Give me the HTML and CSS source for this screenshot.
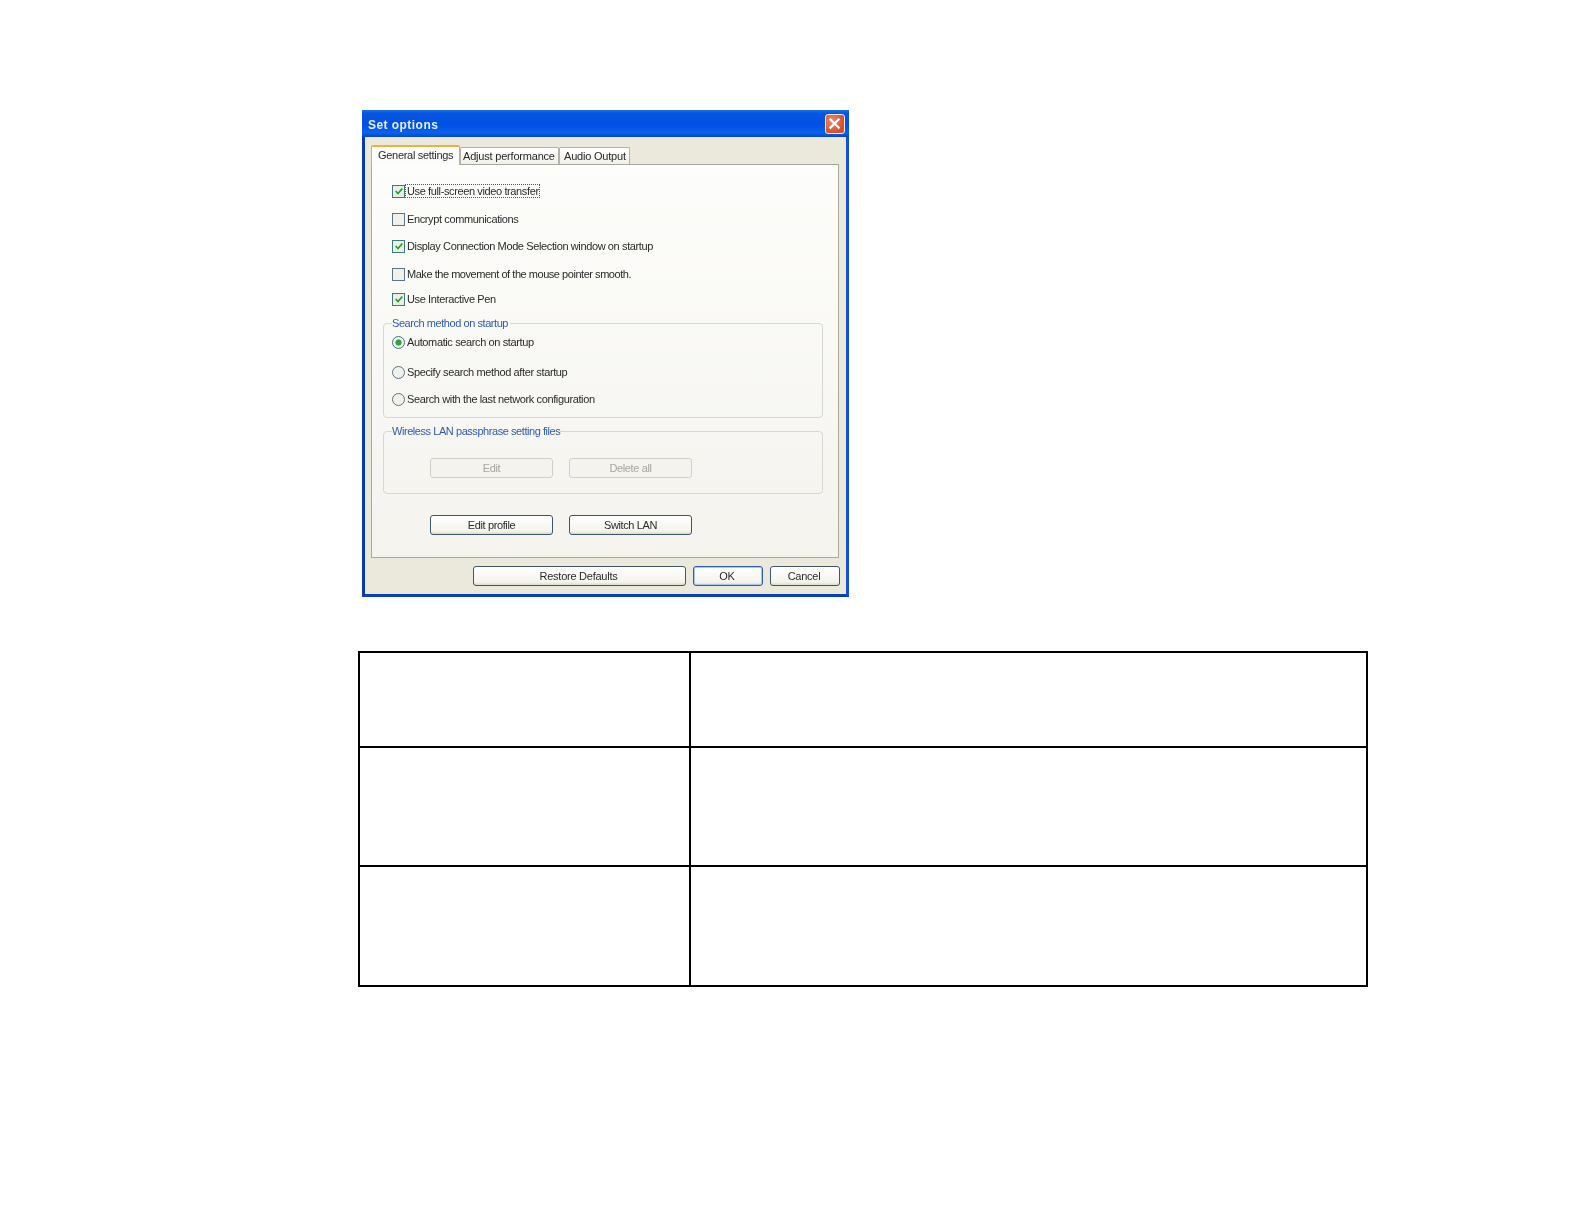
FILE: index.html
```html
<!DOCTYPE html>
<html lang="en">
<head>
<meta charset="utf-8">
<title>Set options</title>
<link rel="stylesheet" href="styles.css">
</head>
<body>
<section class="dialog">
  <header class="titlebar">
    <span class="title">Set options</span>
    <span class="close">
      <svg viewBox="0 0 20 20" width="18" height="18"><path d="M5 5 L14 14 M14 5 L5 14" stroke="#fff" stroke-width="2.4" fill="none" stroke-linecap="square"/></svg>
    </span>
  </header>
  <div class="client">
    <nav class="tabs">
      <span class="tab active">General settings</span>
      <span class="tab adjust">Adjust performance</span>
      <span class="tab audio">Audio Output</span>
    </nav>
    <div class="panel">
      <div class="opt first"><span class="check on"><svg viewBox="0 0 12 12" width="10" height="10"><path d="M2 6 L4.8 9 L10 3" stroke="#21a121" stroke-width="2" fill="none"/></svg></span><span class="label focus">Use full-screen video transfer</span></div>
      <div class="opt g14"><span class="check"></span><span class="label">Encrypt communications</span></div>
      <div class="opt g13"><span class="check on"><svg viewBox="0 0 12 12" width="10" height="10"><path d="M2 6 L4.8 9 L10 3" stroke="#21a121" stroke-width="2" fill="none"/></svg></span><span class="label">Display Connection Mode Selection window on startup</span></div>
      <div class="opt g14"><span class="check"></span><span class="label tight">Make the movement of the mouse pointer smooth.</span></div>
      <div class="opt g11"><span class="check on"><svg viewBox="0 0 12 12" width="10" height="10"><path d="M2 6 L4.8 9 L10 3" stroke="#21a121" stroke-width="2" fill="none"/></svg></span><span class="label">Use Interactive Pen</span></div>

      <fieldset class="group search">
        <legend>Search method on startup</legend>
        <div class="opt"><span class="radio on"></span><span class="label">Automatic search on startup</span></div>
        <div class="opt g16"><span class="radio"></span><span class="label">Specify search method after startup</span></div>
        <div class="opt g13"><span class="radio"></span><span class="label">Search with the last network configuration</span></div>
      </fieldset>

      <fieldset class="group wireless">
        <legend>Wireless LAN passphrase setting files</legend>
        <div class="btnrow">
          <span class="btn disabled">Edit</span>
          <span class="btn disabled">Delete all</span>
        </div>
      </fieldset>

      <div class="btnrow outer">
        <span class="btn">Edit profile</span>
        <span class="btn">Switch LAN</span>
      </div>
    </div>
    <footer class="footer">
      <span class="btn restore">Restore Defaults</span>
      <span class="btn ok">OK</span>
      <span class="btn cancel">Cancel</span>
    </footer>
  </div>
</section>

<table class="sheet">
  <colgroup><col class="c1"><col class="c2"></colgroup>
  <tr class="r1"><td></td><td></td></tr>
  <tr class="r2"><td></td><td></td></tr>
  <tr class="r3"><td></td><td></td></tr>
</table>
</body>
</html>
```
FILE: styles.css
```css
* { box-sizing: border-box; }
html, body { margin: 0; background: #fff; }
body {
  height: 1224px;
  padding-top: 110px;
  font-family: "Liberation Sans", Arial, sans-serif;
  font-size: 11px;
  letter-spacing: -0.38px;
  overflow: hidden;
}
.dialog {
  width: 487px;
  height: 487px;
  margin-left: 362px;
  display: flex;
  flex-direction: column;
  background: #0a4fd8;
  border: 3px solid #0c48c8;
  border-top: 0;
  border-bottom-color: #0b3fb4;
  border-left-color: #0a3ba8;
  border-right-color: #1450d0;
  filter: blur(0.4px);
}
.titlebar {
  height: 27px;
  flex: none;
  margin: 0 -3px;
  padding: 0 4px 0 6px;
  display: flex;
  align-items: center;
  justify-content: space-between;
  background: linear-gradient(#1a74e8 0, #0656e0 12%, #0250e4 55%, #0a62ee 85%, #0046c8 100%);
}
.title {
  color: #e8eef8;
  font: bold 12px "Liberation Sans", sans-serif;
  letter-spacing: 0.45px;
  padding-top: 3px;
}
.close {
  width: 20px;
  height: 20px;
  display: flex;
  align-items: center;
  justify-content: center;
  background: radial-gradient(circle at 35% 35%, #ec8a6c, #d4502c 70%);
  border: 1px solid #f0e8e4;
  border-radius: 3px;
}
.client {
  flex: 1;
  display: flex;
  flex-direction: column;
  background: #ebe9dc;
  padding: 8px 0 0 6px;
}
.tabs {
  display: flex;
  align-items: flex-end;
  height: 19px;
  flex: none;
  color: #2a2a2a;
  letter-spacing: -0.2px;
}
.tab {
  height: 17px;
  display: flex;
  align-items: center;
  border: 1px solid #b4b3a6;
  border-bottom: 0;
  border-radius: 2px 2px 0 0;
  background: linear-gradient(#fff, #f2f1e8);
  white-space: nowrap;
}
.active {
  width: 89px;
  height: 20px;
  padding: 0 0 3px 6px;
  background: #fcfcfa;
  border-top: 2px solid #f0b040;
  position: relative;
  z-index: 1;
  margin-bottom: -1px;
  letter-spacing: -0.3px;
}
.adjust { width: 99px; padding-left: 2px; }
.audio { width: 71px; padding-left: 4px; }
.panel {
  width: 468px;
  height: 394px;
  flex: none;
  border: 1px solid #a9a89c;
  background: linear-gradient(#fdfdfb, #f4f3ee);
  padding: 0 0 0 11px;
  color: #2a2a2a;
}
.opt { display: flex; align-items: center; height: 14px; padding-left: 9px; }
.group .opt { padding-left: 8px; }
.first { margin-top: 19px; }
.g11 { margin-top: 11px; }
.g13 { margin-top: 13px; }
.g14 { margin-top: 14px; }
.g16 { margin-top: 16px; }
.check {
  width: 13px;
  height: 13px;
  flex: none;
  margin-right: 2px;
  display: flex;
  align-items: center;
  justify-content: center;
  border: 1px solid #5c7488;
  background: #f1f1ec;
}
.check.on { border-color: #3f7a78; background: #e8f0e8; }
.radio {
  width: 13px;
  height: 13px;
  flex: none;
  margin-right: 2px;
  border: 1px solid #5c7488;
  border-radius: 50%;
  background: #f1f1ec;
}
.radio.on {
  border-color: #3f7a78;
  background: radial-gradient(circle, #35a045 0 2.8px, #f1f6f1 3.4px);
}
.label { white-space: nowrap; }
.tight { letter-spacing: -0.46px; }
.focus { outline: 1px dotted #555; padding: 0 0 0 1px; margin-left: -1px; }
.group {
  margin: 0;
  width: 440px;
  min-width: 0;
  border: 1px solid #d9d8ce;
  border-radius: 4px;
  padding: 5px 0 11px 0;
}
.group legend {
  margin-left: 8px;
  padding: 0;
  height: 14px;
  line-height: 14px;
  color: #2f5ab0;
  letter-spacing: -0.44px;
}
.search { margin-top: 10px; }
.search legend { padding-right: 2px; }
.wireless { margin-top: 6px; padding: 20px 0 15px 0; }
.btnrow { display: flex; gap: 16px; padding-left: 46px; }
.outer { padding-left: 47px; margin-top: 21px; }
.btn {
  width: 123px;
  height: 20px;
  display: flex;
  align-items: center;
  justify-content: center;
  border: 1px solid #3c5670;
  border-radius: 3px;
  background: linear-gradient(#fff, #f4f3ec 85%, #dcd9c8);
  color: #2a2a2a;
  white-space: nowrap;
}
.disabled {
  border-color: #d2d0c4;
  background: #f4f3ee;
  color: #a8a698;
}
.footer {
  flex: 1;
  display: flex;
  align-items: flex-start;
  padding: 8px 0 0 102px;
  gap: 7px;
  letter-spacing: -0.2px;
}
.restore { width: 213px; letter-spacing: -0.25px; padding-right: 2px; }
.ok { width: 70px; border-color: #2d5fa8; box-shadow: inset 0 0 0 1px #a9c4ec; padding-right: 2px; }
.cancel { width: 70px; letter-spacing: -0.25px; padding-right: 2px; }
.sheet {
  margin: 54px 0 0 358px;
  width: 1010px;
  height: 334px;
  border-collapse: collapse;
  table-layout: fixed;
}
.sheet td { border: 2px solid #000; padding: 0; }
.c1 { width: 331px; }
.r1 { height: 95px; }
.r2 { height: 119px; }
.r3 { height: 120px; }
```
